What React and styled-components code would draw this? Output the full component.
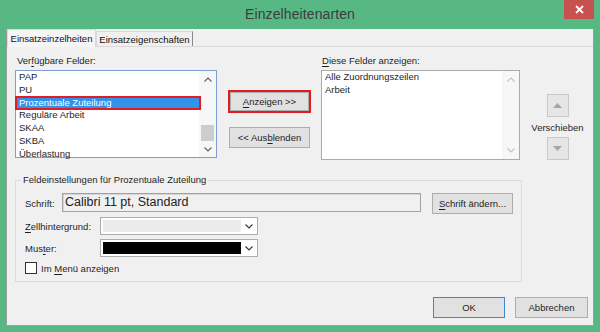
import React from 'react';
import styled, { createGlobalStyle } from 'styled-components';

const Global = createGlobalStyle`
  html, body { margin: 0; padding: 0; background: #58b884; }
  body { font-family: "Liberation Sans", Arial, sans-serif; }
  * { box-sizing: border-box; }
  u { text-decoration-thickness: 1px; text-underline-offset: 1.5px; }
`;

const Window = styled.div`
  width: 600px;
  height: 332px;
  background: #58b884;
  display: flex;
  flex-direction: column;
  font-family: "Liberation Sans", Arial, sans-serif;
  font-size: 9.5px;
  color: #1e1e1e;
`;

const TitleBar = styled.div`
  height: 29px;
  flex: none;
  display: grid;
  grid-template-columns: 1fr auto 1fr;
  align-items: start;
`;

const Title = styled.div`
  grid-column: 2;
  font-size: 14px;
  line-height: 29px;
  color: #3c3c3c;
  letter-spacing: 0.1px;
`;

const Close = styled.div`
  grid-column: 3;
  justify-self: end;
  margin-right: 6px;
  width: 30px;
  height: 19px;
  background: #c75050;
  display: flex;
  align-items: center;
  justify-content: center;
`;

const Client = styled.div`
  flex: 1;
  margin: 0 6px 6px 6px;
  background: #f0f0f0;
  border: 1px solid #9c9c9c;
  border-top: none;
  display: flex;
  flex-direction: column;
`;

const TabStrip = styled.div`
  height: 18px;
  display: flex;
  align-items: flex-end;
  border-bottom: 1px solid #d9d9d9;
`;

const Tab = styled.div`
  height: ${p => (p.$active ? '18px' : '15px')};
  margin-bottom: ${p => (p.$active ? '-1px' : '0')};
  width: ${p => p.$w}px;
  background: ${p => (p.$active ? '#f5f5f5' : '#f0f0f0')};
  border: 1px solid #d9d9d9;
  border-bottom: none;
  border-right-color: ${p => (p.$active ? '#d9d9d9' : '#8a8a8a')};
  display: flex;
  align-items: center;
  justify-content: center;
  white-space: nowrap;
  color: #111;
`;

const Panel = styled.div`
  padding: 8px 8px 0 8px;
  display: flex;
  flex-direction: column;
`;

const TopRow = styled.div`
  height: 105px;
  display: flex;
  align-items: flex-start;
`;

const Column = styled.div`
  width: ${p => p.$w}px;
  margin-left: ${p => p.$ml || 0}px;
  display: flex;
  flex-direction: column;
`;

const FieldLabel = styled.div`
  line-height: 12px;
  height: 12px;
  margin-bottom: 3px;
  padding-left: ${p => p.$pl || 2}px;
  white-space: nowrap;
  color: #1e1e1e;
`;

const ListBox = styled.div`
  height: ${p => p.$h}px;
  border: 1px solid ${p => p.$border};
  background: #ffffff;
  display: flex;
`;

const Items = styled.div`
  flex: 1;
  display: flex;
  flex-direction: column;
`;

const Item = styled.div`
  position: relative;
  height: 12.75px;
  line-height: 12.75px;
  padding-left: 3px;
  white-space: nowrap;
  color: ${p => (p.$selected ? '#ffffff' : '#1e1e1e')};
  background: ${p => (p.$selected ? '#3393ea' : 'transparent')};
  box-shadow: ${p => (p.$selected ? '0 0 0 1px #e31c23, inset 0 0 0 1px #e31c23' : 'none')};
  margin-right: ${p => (p.$selected ? '-1px' : '0')};
  z-index: ${p => (p.$selected ? 1 : 0)};
`;

const ScrollBar = styled.div`
  width: 17px;
  flex: none;
  display: flex;
  flex-direction: column;
  align-items: center;
  background: #f7f7f7;
`;

const ScrollArrow = styled.div`
  height: ${p => p.$h || 17}px;
  width: 17px;
  display: flex;
  align-items: center;
  justify-content: center;
  flex: none;
`;

const Track = styled.div`
  flex: 1;
  display: flex;
  flex-direction: column;
  justify-content: flex-end;
  align-items: center;
`;

const Thumb = styled.div`
  width: 13px;
  height: 16px;
  background: #cdcdcd;
`;

const MiddleCol = styled.div`
  width: 83px;
  margin-left: 11px;
  padding-top: 35px;
  display: flex;
  flex-direction: column;
  align-items: center;
`;

const RedFrame = styled.div`
  width: 83px;
  height: 23px;
  border: 2px solid #e31c23;
  display: flex;
`;

const Button = styled.div`
  width: ${p => (p.$w ? `${p.$w}px` : '100%')};
  height: ${p => p.$h || 21}px;
  margin-top: ${p => p.$mt || 0}px;
  background: #e1e1e1;
  border: 1px solid ${p => (p.$default ? '#3f88cf' : '#adadad')};
  display: flex;
  align-items: center;
  justify-content: center;
  white-space: nowrap;
  color: #1e1e1e;
  flex: none;
`;

const MoveCol = styled.div`
  width: 51px;
  margin-left: 12px;
  padding-top: 39px;
  display: flex;
  flex-direction: column;
  align-items: center;
`;

const MoveButton = styled.div`
  width: 22px;
  height: 23px;
  margin-top: ${p => p.$mt || 0}px;
  background: #e6e6e6;
  border: 1px solid #c8c8c8;
  display: flex;
  align-items: center;
  justify-content: center;
`;

const MoveLabel = styled.div`
  margin-top: 5px;
  line-height: 12px;
  height: 12px;
  white-space: nowrap;
`;

const Group = styled.fieldset`
  margin: 14px 0 0 0;
  width: 507px;
  padding: 0 0 7px 9px;
  border: 1px solid #dcdcdc;
  min-width: 0;
`;

const Legend = styled.legend`
  margin-left: -4px;
  padding: 0 2px;
  line-height: 12px;
  color: #1e1e1e;
  white-space: nowrap;
`;

const Row = styled.div`
  display: flex;
  align-items: center;
  margin-top: ${p => p.$mt || 0}px;
  height: ${p => p.$h}px;
`;

const RowLabel = styled.div`
  width: ${p => p.$w}px;
  white-space: nowrap;
  flex: none;
`;

const FontField = styled.div`
  width: 359px;
  height: 19px;
  border: 1px solid #a2a2a2;
  box-shadow: inset 1px 1px 0 #d6d6d6;
  background: #f0f0f0;
  font-size: 12.5px;
  line-height: 17px;
  padding-left: 2px;
  color: #222;
  margin-right: 11px;
  white-space: nowrap;
  align-self: flex-start;
`;

const Combo = styled.div`
  width: 158px;
  height: 18px;
  border: 1px solid #acacac;
  background: #ffffff;
  display: flex;
  align-items: center;
  padding-left: 2px;
`;

const Swatch = styled.div`
  width: 138px;
  height: 12px;
  background: ${p => p.$color};
`;

const ComboArrow = styled.div`
  flex: 1;
  display: flex;
  align-items: center;
  justify-content: center;
`;

const CheckBox = styled.div`
  width: 12px;
  height: 12px;
  border: 1px solid #333;
  background: #fff;
  margin-right: 4px;
  flex: none;
`;

const Footer = styled.div`
  display: flex;
  justify-content: flex-end;
  gap: 10px;
  margin-right: -3px;
  margin-top: 15px;
`;

const Chevron = ({ up, color = '#606060' }) => (
  <svg width="8" height="5" viewBox="0 0 8 5">
    <polyline
      points={up ? '0.5,4.5 4,1 7.5,4.5' : '0.5,0.5 4,4 7.5,0.5'}
      fill="none"
      stroke={color}
      strokeWidth="1.1"
    />
  </svg>
);

const Triangle = ({ up }) => (
  <svg width="9" height="5" viewBox="0 0 9 5">
    <polygon points={up ? '0,5 4.5,0 9,5' : '0,0 4.5,5 9,0'} fill="#a6a6a6" />
  </svg>
);

const available = ['PAP', 'PU', 'Prozentuale Zuteilung', 'Reguläre Arbeit', 'SKAA', 'SKBA', 'Überlastung'];
const shown = ['Alle Zuordnungszeilen', 'Arbeit'];

export default function App() {
  return (
    <Window>
      <Global />
      <TitleBar>
        <Title>Einzelheitenarten</Title>
        <Close>
          <svg width="9" height="9" viewBox="0 0 9 9">
            <path d="M1 1 L8 8 M8 1 L1 8" stroke="#ffffff" strokeWidth="1.8" />
          </svg>
        </Close>
      </TitleBar>
      <Client>
        <TabStrip>
          <Tab $active $w={89}>Einsatzeinzelheiten</Tab>
          <Tab $w={97}>Einsatzeigenschaften</Tab>
        </TabStrip>
        <Panel>
          <TopRow>
            <Column $w={202}>
              <FieldLabel>Ver<u>f</u>ügbare Felder:</FieldLabel>
              <ListBox $h={88} $border="#7f9ed0">
                <Items>
                  {available.map((t, i) => (
                    <Item key={t} $selected={i === 2}>{t}</Item>
                  ))}
                </Items>
                <ScrollBar>
                  <ScrollArrow><Chevron up /></ScrollArrow>
                  <Track><Thumb /></Track>
                  <ScrollArrow $h={16}><Chevron /></ScrollArrow>
                </ScrollBar>
              </ListBox>
            </Column>
            <MiddleCol>
              <RedFrame>
                <Button $h={19}><u>A</u>nzeigen &gt;&gt;</Button>
              </RedFrame>
              <Button $w={81} $mt={14}>&lt;&lt; Aus<u>b</u>lenden</Button>
            </MiddleCol>
            <Column $w={199} $ml={10}>
              <FieldLabel $pl={1}><u>D</u>iese Felder anzeigen:</FieldLabel>
              <ListBox $h={90} $border="#ababab">
                <Items>
                  {shown.map(t => (
                    <Item key={t}>{t}</Item>
                  ))}
                </Items>
                <ScrollBar>
                  <ScrollArrow><Chevron up color="#c2c2c2" /></ScrollArrow>
                  <Track />
                  <ScrollArrow><Chevron color="#c2c2c2" /></ScrollArrow>
                </ScrollBar>
              </ListBox>
            </Column>
            <MoveCol>
              <MoveButton><Triangle up /></MoveButton>
              <MoveLabel>Verschieben</MoveLabel>
              <MoveButton $mt={3}><Triangle /></MoveButton>
            </MoveCol>
          </TopRow>
          <Group>
            <Legend>Feldeinstellungen für Prozentuale Zuteilung</Legend>
            <Row $h={21} $mt={7}>
              <RowLabel $w={37}>Schrift:</RowLabel>
              <FontField>Calibri 11 pt, Standard</FontField>
              <Button $w={81}><u>S</u>chrift ändern...</Button>
            </Row>
            <Row $h={18} $mt={3}>
              <RowLabel $w={75}><u>Z</u>ellhintergrund:</RowLabel>
              <Combo>
                <Swatch $color="#ebebeb" />
                <ComboArrow><Chevron color="#333" /></ComboArrow>
              </Combo>
            </Row>
            <Row $h={18} $mt={4}>
              <RowLabel $w={75}>Mus<u>t</u>er:</RowLabel>
              <Combo>
                <Swatch $color="#000000" />
                <ComboArrow><Chevron color="#333" /></ComboArrow>
              </Combo>
            </Row>
            <Row $h={12} $mt={5}>
              <CheckBox />
              <span>Im <u>M</u>enü anzeigen</span>
            </Row>
          </Group>
          <Footer>
            <Button $w={72} $default>OK</Button>
            <Button $w={73}>Abbrechen</Button>
          </Footer>
        </Panel>
      </Client>
    </Window>
  );
}
